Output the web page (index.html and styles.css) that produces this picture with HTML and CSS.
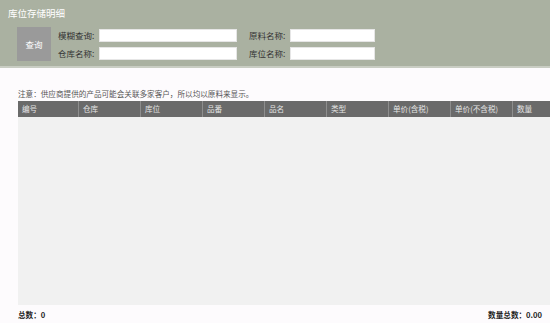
FILE: index.html
```html
<!DOCTYPE html>
<html>
<head>
<meta charset="utf-8">
<link rel="stylesheet" href="styles.css">
</head>
<body>
<div class="page">
  <div class="top">
    <div class="title">库位存储明细</div>
    <div class="search">
      <div class="btn">查询</div>
      <div class="fields">
        <div class="row">
          <span class="lbl">模糊查询:</span><span class="inp w1"></span>
          <span class="lbl l2">原料名称:</span><span class="inp w2"></span>
        </div>
        <div class="row">
          <span class="lbl">仓库名称:</span><span class="inp w1"></span>
          <span class="lbl l2">库位名称:</span><span class="inp w2"></span>
        </div>
      </div>
    </div>
  </div>
  <div class="note">注意：供应商提供的产品可能会关联多家客户，所以均以原料来显示。</div>
  <div class="grid">
    <div class="thead">
      <div class="th c1">编号</div>
      <div class="th">仓库</div>
      <div class="th">库位</div>
      <div class="th">品番</div>
      <div class="th">品名</div>
      <div class="th">类型</div>
      <div class="th">单价(含税)</div>
      <div class="th">单价(不含税)</div>
      <div class="th">数量</div>
    </div>
    <div class="tbody"></div>
  </div>
  <div class="foot">
    <span>总数：0</span>
    <span>数量总数：0.00</span>
  </div>
</div>
</body>
</html>
```
FILE: styles.css
```css
html, body {
  margin: 0;
  padding: 0;
  background: #fdfbfd;
  overflow: hidden;
}
.page {
  width: 550px;
  height: 323px;
  font-family: "Noto Sans CJK SC", "Liberation Sans", sans-serif;
  font-size: 8px;
  color: #333;
  display: flex;
  flex-direction: column;
}
.top {
  background: #aab1a1;
  height: 66px;
  border-bottom: 2px solid #c9cdc3;
  padding: 6px 0 0 8px;
  box-sizing: content-box;
  height: 60px;
}
.title {
  color: #fff;
  font-size: 9.5px;
  line-height: 14px;
}
.search {
  display: flex;
  margin: 7px 0 0 9px;
}
.btn {
  width: 34px;
  height: 34px;
  background: #9a9a9a;
  color: #fff;
  font-size: 8.5px;
  display: flex;
  align-items: center;
  justify-content: center;
}
.fields {
  margin-left: 7px;
  padding-top: 2px;
  display: flex;
  flex-direction: column;
  gap: 5px;
}
.row {
  display: flex;
  align-items: center;
  height: 13px;
}
.lbl {
  width: 41px;
  color: #333;
  font-size: 8.5px;
  line-height: 13px;
}
.l2 {
  margin-left: 12px;
}
.inp {
  height: 13px;
  background: #fff;
  box-sizing: border-box;
  border: 1px solid #e6e6e6;
}
.w1 { width: 138px; }
.w2 { width: 85px; }
.note {
  margin: 20px 0 0 18px;
  height: 13px;
  line-height: 11px;
  font-size: 7.6px;
  color: #555;
}
.grid {
  margin-left: 18px;
  flex: 1;
  display: flex;
  flex-direction: column;
  overflow: hidden;
}
.thead {
  display: flex;
  height: 16px;
  background: #6a6a6a;
  flex: none;
}
.th {
  width: 61px;
  flex: none;
  border-left: 1px solid #8e8e8e;
  color: #e4e4e4;
  font-size: 7.6px;
  line-height: 16px;
  padding-left: 4px;
  box-sizing: content-box;
  width: 57px;
}
.th.c1 {
  border-left: none;
  width: 56px;
}
.tbody {
  flex: 1;
  background: #f1f1f1;
}
.foot {
  height: 18px;
  display: flex;
  justify-content: space-between;
  align-items: center;
  padding: 0 8px 0 18px;
  font-weight: bold;
  font-size: 7.6px;
  color: #222;
}
```
